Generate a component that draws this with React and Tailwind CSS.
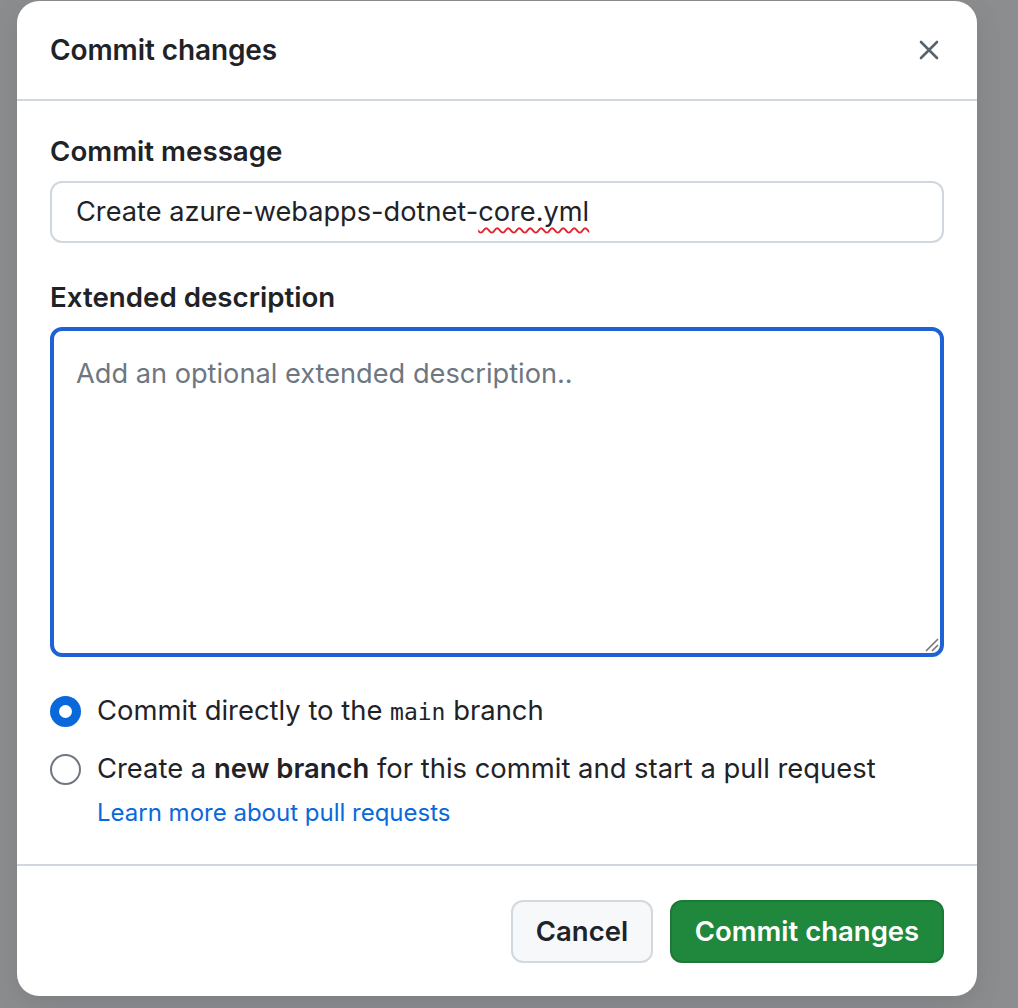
import React from 'react'

function CloseIcon() {
  return (
    <svg width="22" height="22" viewBox="0 0 22 22" fill="none">
      <path d="M3 3L19 19M19 3L3 19" stroke="#59636e" strokeWidth="2.6" strokeLinecap="round" />
    </svg>
  )
}

function Radio({ checked }) {
  if (checked) {
    return (
      <span className="flex h-[31px] w-[31px] shrink-0 items-center justify-center rounded-full bg-[#0969da]">
        <span className="h-[13px] w-[13px] rounded-full bg-white" />
      </span>
    )
  }
  return <span className="h-[31px] w-[31px] shrink-0 rounded-full border-2 border-[#6e7781] bg-white" />
}

export default function App() {
  return (
    <div className="min-h-[1008px] bg-[#8c8d8f] pt-[1px] font-['Inter',sans-serif] text-[#1f2328]">
      <div className="ml-[17px] flex w-[960px] flex-col rounded-[22px] bg-white shadow-[0_8px_24px_rgba(66,74,83,0.2)]">
        {/* header */}
        <div className="flex h-[100px] items-center justify-between border-b-2 border-[#d0d7de] pl-[33px] pr-[28px]">
          <h1 className="text-[28px] font-semibold tracking-[-0.1px]">Commit changes</h1>
          <button className="flex h-[40px] w-[40px] items-center justify-center">
            <CloseIcon />
          </button>
        </div>

        {/* body */}
        <div className="px-[33px] pb-[35px] pt-[32px]">
          <div className="h-[36px] text-[27.7px] font-semibold leading-[36px]">Commit message</div>
          <div className="mt-[12px] flex h-[62px] items-center rounded-[12px] border-2 border-[#d0d7de] px-[24px] text-[27.2px]">
            <span>
              Create azure-webapps-dotnet-
              <span className="underline decoration-[#e5212b] decoration-wavy decoration-[1.5px] underline-offset-[6px]">core.yml</span>
            </span>
          </div>

          <div className="mt-[36px] h-[36px] text-[27.7px] font-semibold leading-[36px]">Extended description</div>
          <div className="relative mt-[12px] h-[330px] rounded-[12px] border-[4px] border-[#1f62d6] px-[22px] pt-[23px] text-[27.2px] text-[#6e7781]">
            Add an optional extended description..
            <svg className="absolute bottom-[1px] right-[1px]" width="18" height="18" viewBox="0 0 18 18">
              <path d="M17 5L5 17M17 11L11 17" stroke="#767676" strokeWidth="1.6" />
            </svg>
          </div>

          <div className="mt-[36px] flex h-[36px] items-center gap-[16px] text-[27.4px]">
            <Radio checked />
            <span>
              Commit directly to the <span className="font-['DejaVu_Sans_Mono',monospace] text-[23px]">main</span> branch
            </span>
          </div>
          <div className="mt-[22px] flex h-[36px] items-center gap-[16px] text-[27.4px]">
            <Radio />
            <span>
              Create a <span className="font-semibold">new branch</span> for this commit and start a pull request
            </span>
          </div>
          <div className="mt-[10px] pl-[47px] text-[24px] leading-[32px] text-[#0969da]">Learn more about pull requests</div>
        </div>

        {/* footer */}
        <div className="flex justify-end gap-[17px] border-t-2 border-[#d0d7de] px-[33px] pb-[33px] pt-[34px]">
          <button className="h-[63px] w-[142px] rounded-[12px] border-2 border-[#d1d9e0] bg-[#f6f8fa] text-[27.5px] font-semibold">
            Cancel
          </button>
          <button className="h-[63px] w-[274px] rounded-[12px] border-2 border-[#1c7a37] bg-[#1f883d] text-[27.5px] font-semibold text-white">
            Commit changes
          </button>
        </div>
      </div>
    </div>
  )
}
